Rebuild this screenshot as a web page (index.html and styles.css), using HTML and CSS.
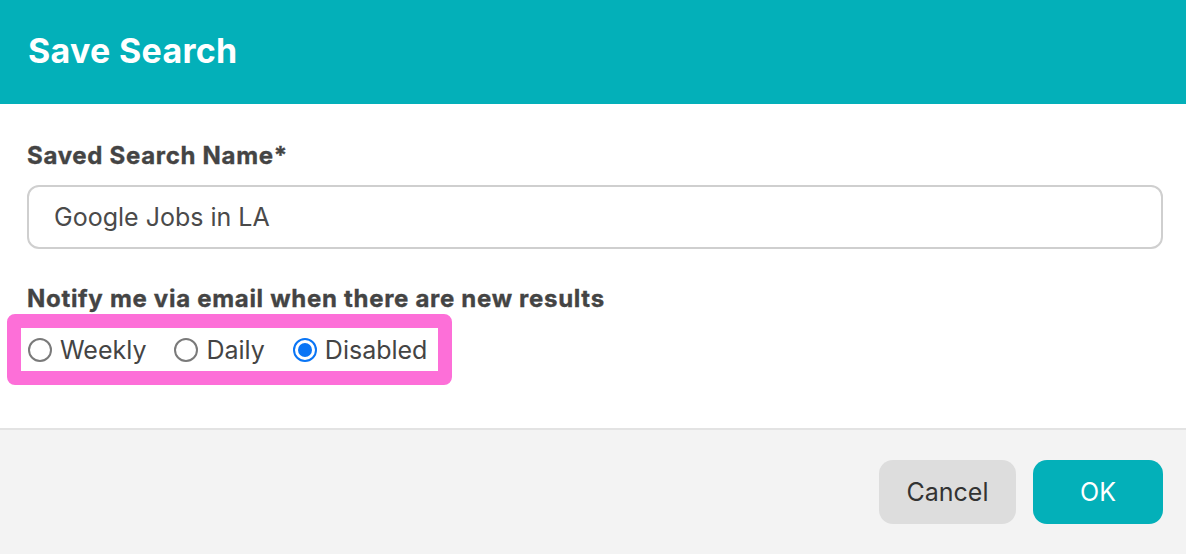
FILE: index.html
```html
<!DOCTYPE html>
<html>
<head>
<meta charset="utf-8">
<link rel="stylesheet" href="styles.css">
</head>
<body>
<div class="dialog">
  <header class="head"><h1 class="title">Save Search</h1></header>
  <main class="body">
    <label class="label">Saved Search Name*</label>
    <div class="input">Google Jobs in LA</div>
    <div class="label label-notify">Notify me via email when there are new results</div>
    <div class="highlight">
      <div class="radios">
        <span class="opt"><span class="radio"></span>Weekly</span>
        <span class="opt"><span class="radio"></span>Daily</span>
        <span class="opt"><span class="radio checked"></span>Disabled</span>
      </div>
    </div>
  </main>
  <footer class="foot">
    <button class="btn btn-cancel">Cancel</button>
    <button class="btn btn-ok">OK</button>
  </footer>
</div>
</body>
</html>
```
FILE: styles.css
```css
html, body { margin: 0; padding: 0; }
body { font-family: Inter, "Noto Sans", sans-serif; background: #fff; width: 1186px; height: 554px; overflow: hidden; }
.dialog { display: flex; flex-direction: column; height: 554px; }
.head { background: #03b0b9; height: 104px; display: flex; align-items: center; padding: 0 28px; box-sizing: border-box; }
.title { margin: 0; color: #fff; font-size: 34px; font-weight: 700; letter-spacing: 0.3px; padding-bottom: 4px; }
.body { flex: 1; padding: 38px 23px 0 27px; display: flex; flex-direction: column; align-items: flex-start; }
.label { font-size: 24px; font-weight: 700; color: #444; line-height: 28px; letter-spacing: 0.7px; -webkit-text-stroke: 0.35px #444; }
.input { align-self: stretch; margin-top: 15px; height: 64px; box-sizing: border-box; border: 2px solid #cfcfcf; border-radius: 12px; padding: 0 25px; display: flex; align-items: center; font-size: 25px; color: #4a4a4a; }
.label-notify { margin-top: 36px; }
.highlight { margin-left: -20px; margin-top: 1px; border: 14px solid #fd6fd8; border-radius: 8px; background: #fff; padding: 0 0 0 7px; }
.radios { display: flex; align-items: center; height: 43px; padding-right: 11px; gap: 28px; }
.opt { display: flex; align-items: center; font-size: 25px; color: #444; gap: 8px; }
.radio { width: 24px; height: 24px; box-sizing: border-box; border: 2px solid #7a7a7a; border-radius: 50%; background: #fff; }
.radio.checked { border: 2px solid #0a75f5; position: relative; }
.radio.checked::after { content: ""; position: absolute; left: 3px; top: 3px; width: 14px; height: 14px; border-radius: 50%; background: #0a75f5; }
.foot { height: 126px; background: #f3f3f3; border-top: 2px solid #e3e3e3; display: flex; justify-content: flex-end; align-items: center; gap: 17px; padding: 0 23px 0 0; box-sizing: border-box; }
.btn { height: 64px; border: none; border-radius: 14px; font-family: inherit; font-size: 25px; padding: 0; }
.btn-cancel { width: 137px; background: #dddddd; color: #333; }
.btn-ok { width: 130px; background: #03b0b9; color: #fff; }
```
